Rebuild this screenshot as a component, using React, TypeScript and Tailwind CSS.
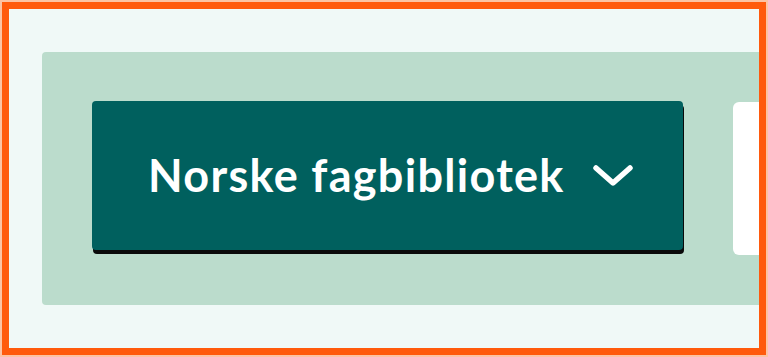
export default function App() {
  return (
    <div className="h-[357px] w-[768px] overflow-hidden bg-[#fcc3a3] p-[2px]">
      <div className="h-full w-full overflow-hidden border-[7px] border-[#ff5a0c] bg-[#f0f9f7] pl-[33px] pt-[43px]">
        <div className="flex h-[253px] w-[900px] items-start gap-[50px] rounded-[4px] bg-[#bbdccc] pl-[50px] pt-[49px]">
          <button className="flex h-[149px] w-[591px] shrink-0 items-center rounded-[4px] bg-[#00605e] pl-[56px] pr-[50px] shadow-[1px_4px_0_#0a0a0a]">
            <span className="font-['Lato',sans-serif] text-[45px] font-bold leading-none tracking-[1.3px] text-white">
              Norske fagbibliotek
            </span>
            <svg className="ml-auto" width="40" height="24" viewBox="0 0 40 24" fill="none">
              <polyline
                points="3,4 20,19 37,4"
                stroke="white"
                strokeWidth="5.5"
                strokeLinecap="round"
                strokeLinejoin="round"
              />
            </svg>
          </button>
          <div className="mt-px h-[153px] w-[200px] shrink-0 rounded-[6px] bg-white" />
        </div>
      </div>
    </div>
  )
}
